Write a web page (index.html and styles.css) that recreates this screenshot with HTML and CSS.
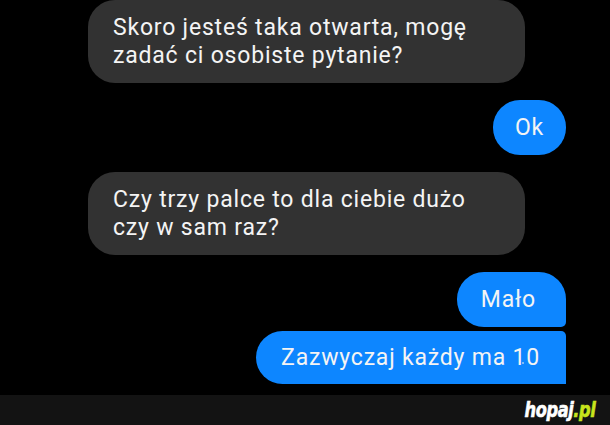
FILE: index.html
```html
<!DOCTYPE html>
<html>
<head>
    <meta charset="UTF-8">
    <meta name="viewport" content="width=device-width, initial-scale=1.0">
    <title>Czat</title>
    <link rel="stylesheet" href="styles.css">
</head>
<body>
    <section class="chat">
        <div class="bubble received">Skoro jesteś taka otwarta, mogę<br>zadać ci osobiste pytanie?</div>
        <div class="bubble sent short">Ok</div>
        <div class="bubble received">Czy trzy palce to dla ciebie dużo<br>czy w sam raz?</div>
        <div class="group">
            <div class="bubble sent first">Mało</div>
            <div class="bubble sent last">Zazwyczaj każdy ma 1<span class="dot"></span>0</div>
        </div>
    </section>

    <footer class="bar">
        <span class="logo">hopaj<span class="logo-pl">.pl</span></span>
    </footer>
</body>
</html>
```

FILE: styles.css
```css
* {
    margin: 0;
    padding: 0;
    box-sizing: border-box;
}

body {
    background-color: #000000;
    color: #f4f4f4;
    font-family: Roboto, 'Noto Sans', sans-serif;
    width: 610px;
    height: 425px;
    overflow: hidden;
    display: flex;
    flex-direction: column;
}

.chat {
    height: 395px;
    padding: 0 44px 0 88px;
    display: flex;
    flex-direction: column;
    gap: 17px;
}

.bubble {
    font-size: 23px;
    letter-spacing: 0.8px;
    line-height: 28px;
    padding: 13.5px 25px;
    border-radius: 27px;
    white-space: nowrap;
}

.received {
    align-self: flex-start;
    width: 437px;
    background-color: #323232;
}

.sent {
    align-self: flex-end;
    background-color: #0d86ff;
}

.short {
    padding-left: 22px;
    padding-right: 22px;
}

.group {
    display: flex;
    flex-direction: column;
    gap: 4px;
}

.first {
    padding-left: 24px;
    padding-right: 30px;
    border-bottom-right-radius: 5px;
}

.last {
    padding-top: 12.5px;
    padding-bottom: 12.5px;
    padding-right: 26px;
    border-top-right-radius: 5px;
    border-bottom-right-radius: 0;
}

/* mała kropka między 1 i 0 */
.dot {
    position: relative;
    display: inline-block;
    width: 0;
    height: 0;
}

.dot::after {
    content: '';
    position: absolute;
    left: -4px;
    top: -3px;
    width: 2px;
    height: 2px;
    border-radius: 50%;
    background: #a9cdf2;
}

/* Pasek z logo */
.bar {
    height: 30px;
    background-color: #131313;
    display: flex;
    justify-content: flex-end;
    align-items: center;
    padding-right: 15px;
}

.logo {
    font-family: 'DejaVu Sans Condensed', 'DejaVu Sans', sans-serif;
    font-stretch: condensed;
    font-weight: 700;
    font-style: italic;
    font-size: 22px;
    line-height: 22px;
    color: #ffffff;
    letter-spacing: -0.5px;
    display: inline-block;
    transform: scaleX(0.82);
    transform-origin: right center;
    -webkit-text-stroke: 0.6px currentColor;
}

.logo-pl {
    color: #c8e41c;
}
```
